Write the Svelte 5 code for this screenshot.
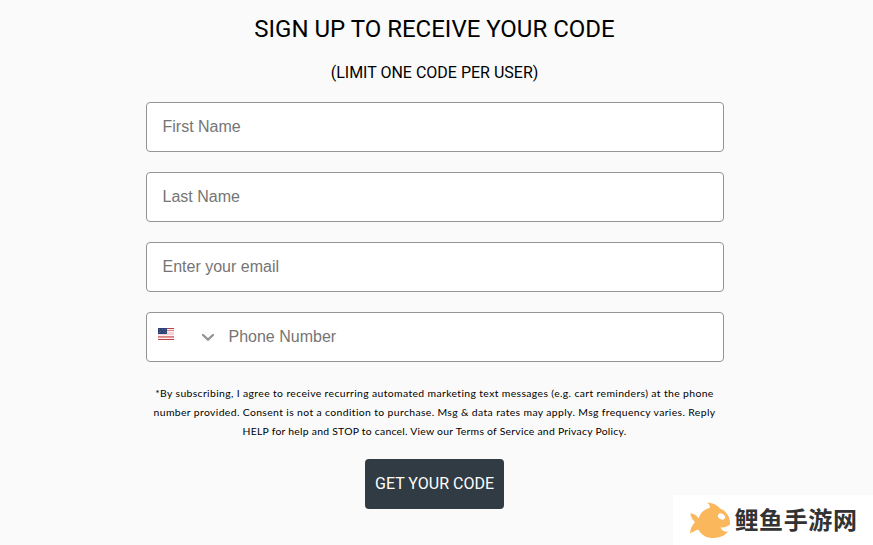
<script lang="ts">
  // Sign-up form for the promo code, with the site badge in the bottom corner.
  const fields = [
    { name: 'firstName', type: 'text', label: 'First Name' },
    { name: 'lastName', type: 'text', label: 'Last Name' },
    { name: 'email', type: 'email', label: 'Enter your email' },
  ]

  const legal = [
    '*By subscribing, I agree to receive recurring automated marketing text messages (e.g. cart reminders) at the phone',
    'number provided. Consent is not a condition to purchase. Msg & data rates may apply. Msg frequency varies. Reply',
    'HELP for help and STOP to cancel. View our Terms of Service and Privacy Policy.',
  ]
</script>

<main class="page">
  <form class="signup" novalidate onsubmit={(e) => e.preventDefault()}>
    <h1>SIGN UP TO RECEIVE YOUR CODE</h1>
    <h2>(LIMIT ONE CODE PER USER)</h2>

    <div class="fields">
      {#each fields as f (f.name)}
        <div class="field">
          <input type={f.type} name={f.name} placeholder={f.label} aria-label={f.label} />
        </div>
      {/each}

      <div class="field phone">
        <button type="button" class="country" aria-label="Country: United States">
          <svg class="flag" width="16" height="12" viewBox="0 0 16 12" shape-rendering="crispEdges">
            <rect width="16" height="12" fill="#f3d3d7" />
            <path d="M9 0h7v1H9zM0 11h16v1H0z" fill="#bd3d44" />
            <path d="M9 2h7v1H9zM0 8h16v1H0z" fill="#d98086" />
            <path d="M9 1h7v1H9zM9 3h7v1H9zM0 7h16v1H0zM0 10h16v1H0z" fill="#fbeff0" />
            <path d="M0 9h16v1H0z" fill="#e1999e" />
            <rect width="9" height="6" fill="#2f4273" />
            <path d="M1 1h1v1H1zM4 1h1v1H4zM7 1h1v1H7zM2 3h1v1H2zM5 3h1v1H5zM1 4h1v1H1zM7 4h1v1H7z" fill="#526292" />
          </svg>
          <svg class="chevron" width="14" height="9" viewBox="0 0 14 9">
            <path d="M2 2l5 4.700L12 2" fill="none" stroke="#949494" stroke-width="2.3" stroke-linecap="round" />
          </svg>
        </button>
        <input type="tel" name="phone" placeholder="Phone Number" aria-label="Phone Number" />
      </div>
    </div>

    <p class="legal">
      {#each legal as line}
        <span>{line}</span>
      {/each}
    </p>

    <button class="submit" type="submit">GET YOUR CODE</button>
  </form>

  <aside class="badge">
    <svg width="42" height="37" viewBox="0 0 42 37">
      <path
        d="M1.300 11.500C4.500 11.500 7.500 13 9.700 16.500 11 11.500 14.500 7.500 21 5.800 21 3.500 20 2 18 .5 23 .8 28 2.500 31 6.500 37.500 9 41.500 15 41 22.500 38 25 35 25.500 31.500 25.500 32.500 28.500 35 30 39 29.600 36 34 30.500 36 24.500 36 17.500 36 12.500 33.500 9.300 27.500 6.500 28 4 30 1 31.500 1.200 27.500 3 23.500 6 20 3.500 18 1.800 15 1.300 11.500z"
        fill="#fbb75b"
      />
      <ellipse cx="32.500" cy="14.500" rx="3.800" ry="2.700" transform="rotate(28 32.500 14.500)" fill="#fff" />
    </svg>
    <span>鲤鱼手游网</span>
  </aside>
</main>

<style>
  :global(body) {
    background: #fafafa;
  }
  .page {
    position: relative;
    box-sizing: border-box;
    height: 545px;
    padding: 12px 149px 0 146px;
    overflow: hidden;
    font-family: Roboto, sans-serif;
    color: #000;
  }
  .signup {
    display: flex;
    flex-direction: column;
    align-items: center;
  }
  h1,
  h2 {
    margin: 0 1px 0 0;
    font-weight: 400;
  }
  h1 {
    font-size: 24px;
    line-height: 34px;
  }
  h2 {
    margin-top: 15px;
    font-size: 16px;
    line-height: 24px;
  }
  .fields {
    display: grid;
    gap: 20px;
    width: 100%;
    margin-top: 17px;
  }
  .field {
    display: flex;
    box-sizing: border-box;
    height: 50px;
    border: 1px solid #949494;
    border-radius: 4px;
    background: #fff;
    overflow: hidden;
  }
  input {
    flex: 1;
    min-width: 0;
    padding: 0 15.5px;
    border: 0;
    outline: 0;
    background: none;
    font: 16px 'Liberation Sans', Arial, sans-serif;
  }
  input::placeholder {
    color: #757575;
    opacity: 1;
  }
  .phone input {
    padding-left: 10.5px;
  }
  .country {
    display: flex;
    justify-content: space-between;
    align-items: center;
    width: 71px;
    padding: 0 3px 0 11px;
    border: 0;
    background: none;
  }
  .flag {
    margin-bottom: 6px;
  }
  .chevron {
    margin-top: 1px;
  }
  .legal {
    margin: 22px 1px 0 0;
    font-family: 'Century Gothic', Lato, sans-serif;
    font-size: 10.4px;
    line-height: 19px;
    letter-spacing: 0.37px;
    text-align: center;
    white-space: nowrap;
  }
  .legal span {
    display: block;
  }
  .legal span:last-child {
    letter-spacing: 0.25px;
  }
  .submit {
    width: 139px;
    height: 50px;
    margin: 18px 2px 0 0;
    padding: 0 0 2px 1px;
    border: 0;
    border-radius: 4px;
    background: #303b43;
    color: #fff;
    font: 400 16px Roboto, sans-serif;
  }
  .badge {
    position: absolute;
    right: 0;
    bottom: 0;
    display: flex;
    align-items: center;
    box-sizing: border-box;
    width: 200px;
    height: 50px;
    padding-left: 16px;
    background: #fff;
    color: #333;
    font: 700 24px 'Noto Sans CJK SC', sans-serif;
    white-space: nowrap;
  }
  .badge span {
    margin: 0 0 4px 3.5px;
    letter-spacing: 0.6px;
  }
</style>
